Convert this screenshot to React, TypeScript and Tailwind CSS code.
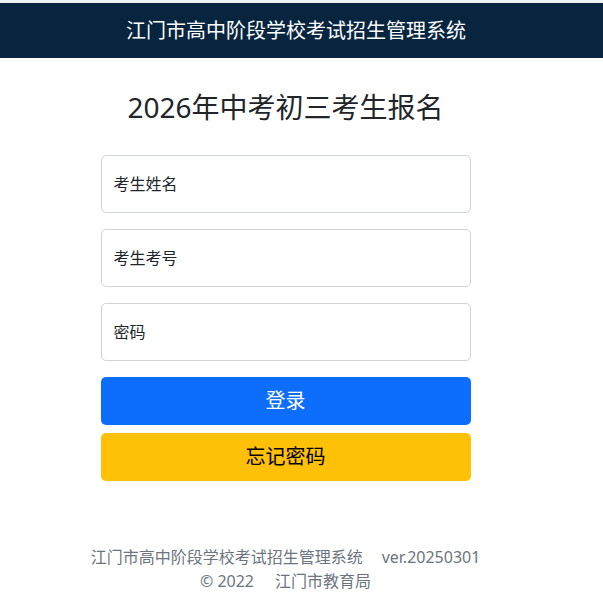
const font = { fontFamily: '"Noto Sans", "Noto Sans CJK SC", sans-serif' };

function Field({ placeholder }: { placeholder: string }) {
  return (
    <input
      type="text"
      placeholder={placeholder}
      className="h-[58px] w-full rounded-[5px] border border-[#ced4da] bg-white px-3 text-[16px] text-[#212529] outline-none placeholder:text-[#212529]"
    />
  );
}

export default function App() {
  return (
    <div className="min-h-[595px] bg-white" style={font}>
      <div className="h-[3px] bg-[#eef0f3]" />
      <header className="flex h-[55px] items-center justify-center bg-[#07253f] pr-[11px]">
        <h1 className="text-[20px] leading-none text-white">江门市高中阶段学校考试招生管理系统</h1>
      </header>

      <div className="w-[571px]">
        <main className="mx-auto flex w-[370px] flex-col pt-[31px]">
          <h2 className="text-center text-[28px] leading-[36px] text-[#212529]">2026年中考初三考生报名</h2>

          <form className="mt-[30px] flex flex-col gap-4" onSubmit={(e) => e.preventDefault()}>
            <Field placeholder="考生姓名" />
            <Field placeholder="考生考号" />
            <Field placeholder="密码" />
            <div className="flex flex-col gap-2">
              <button className="h-[48px] rounded-[5px] bg-[#0d6efd] text-[20px] text-white">登录</button>
              <button className="h-[48px] rounded-[5px] bg-[#ffc107] text-[20px] text-black">忘记密码</button>
            </div>
          </form>
        </main>

        <footer className="mt-[64px] text-center text-[16px] leading-[24px] text-[#6c757d]">
          <p>
            江门市高中阶段学校考试招生管理系统<span className="ml-[19px]">ver.20250301</span>
          </p>
          <p>
            © 2022<span className="ml-[21px]">江门市教育局</span>
          </p>
        </footer>
      </div>
    </div>
  );
}
